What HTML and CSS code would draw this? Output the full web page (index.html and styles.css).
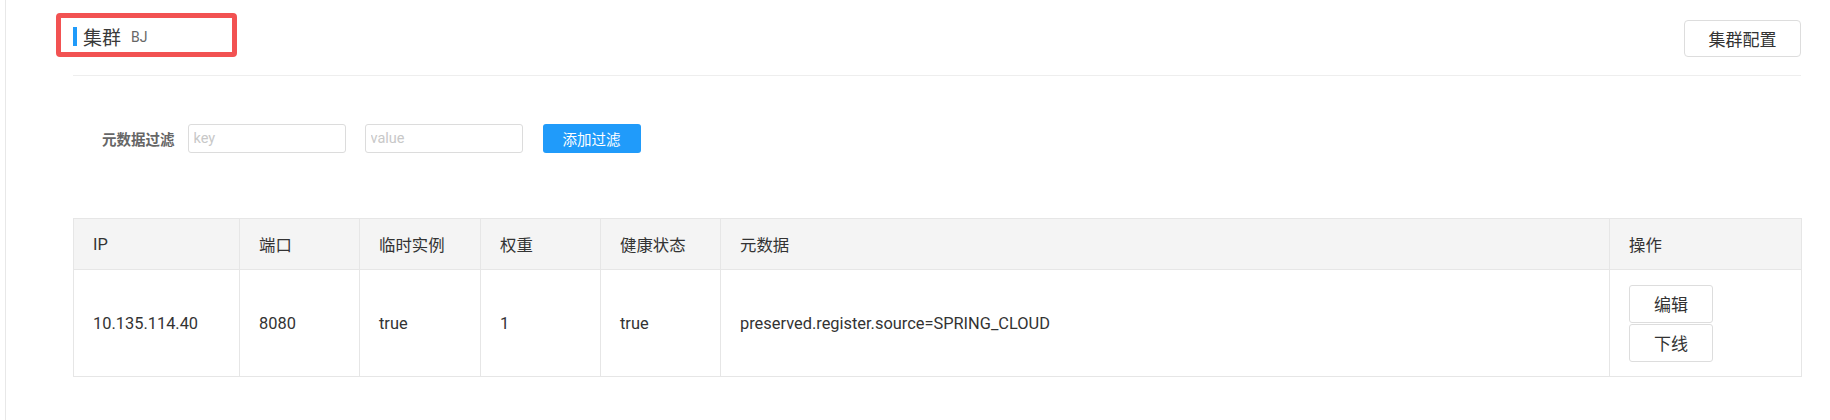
FILE: index.html
```html
<!DOCTYPE html>
<html lang="zh">
<head>
<meta charset="utf-8">
<title>集群</title>
<link rel="stylesheet" href="styles.css">
</head>
<body>
<div class="page">
  <div class="header">
    <div class="title-box"><span class="bar"></span><span class="title">集群</span><span class="sub">BJ</span></div>
    <button class="btn cfg">集群配置</button>
  </div>
  <div class="divider"></div>
  <div class="filter">
    <label class="flabel">元数据过滤</label>
    <input class="finput" placeholder="key">
    <input class="finput second" placeholder="value">
    <button class="btn-primary">添加过滤</button>
  </div>
  <table class="grid">
    <colgroup>
      <col style="width:166px"><col style="width:120px"><col style="width:121px"><col style="width:120px"><col style="width:120px"><col style="width:889px"><col style="width:192px">
    </colgroup>
    <thead>
      <tr><th>IP</th><th>端口</th><th>临时实例</th><th>权重</th><th>健康状态</th><th>元数据</th><th>操作</th></tr>
    </thead>
    <tbody>
      <tr>
        <td>10.135.114.40</td><td>8080</td><td>true</td><td>1</td><td>true</td>
        <td>preserved.register.source=SPRING_CLOUD</td>
        <td><div class="ops"><button class="btn op">编辑</button><button class="btn op">下线</button></div></td>
      </tr>
    </tbody>
  </table>
</div>
</body>
</html>
```
FILE: styles.css
```css
body {
  margin: 0;
  font-family: Roboto, "Noto Sans CJK SC", sans-serif;
  color: #333;
  background: #fff;
}
.page {
  margin-left: 5px;
  border-left: 1px solid #e8e8e8;
  min-height: 420px;
  padding: 0 29px 0 67px;
  box-sizing: border-box;
}
.header {
  display: flex;
  justify-content: space-between;
  align-items: flex-end;
  padding-top: 13px;
}
.title-box {
  margin-left: -17px;
  width: 181px;
  height: 44px;
  box-sizing: border-box;
  border: 5px solid #f25252;
  border-radius: 4px;
  display: flex;
  align-items: center;
  padding-left: 12px;
  padding-top: 3px;
}
.bar {
  width: 4px;
  height: 19px;
  background: #209bfa;
  margin-right: 6px;
}
.title {
  font-size: 19px;
  color: #3a3a3a;
}
.sub {
  font-size: 14px;
  color: #666;
  margin-left: 10px;
}
.btn {
  background: #fff;
  border: 1px solid #ddd;
  color: #333;
  font-family: inherit;
  cursor: pointer;
  padding: 0;
}
.cfg {
  width: 117px;
  height: 37px;
  border-radius: 4px;
  font-size: 17px;
}
.divider {
  height: 1px;
  background: #eee;
  margin-top: 18px;
}
.filter {
  display: flex;
  align-items: center;
  margin-top: 48px;
  padding-left: 29px;
}
.flabel {
  font-size: 14.5px;
  font-weight: bold;
  color: #666;
  margin-right: 13px;
}
.finput {
  width: 158px;
  height: 29px;
  box-sizing: border-box;
  border: 1px solid #dcdcdc;
  border-radius: 3px;
  padding: 0 5px;
  font-size: 14.5px;
  font-family: inherit;
}
.finput::placeholder {
  color: #c8c8c8;
}
.second {
  margin-left: 19px;
}
.btn-primary {
  margin-left: 20px;
  width: 98px;
  height: 29px;
  background: #209bfa;
  color: #fff;
  border: none;
  border-radius: 3px;
  font-size: 14.5px;
  font-family: inherit;
  padding: 0;
}
.grid {
  margin-top: 65px;
  border-collapse: collapse;
  width: 1728px;
  table-layout: fixed;
}
.grid th,
.grid td {
  border: 1px solid #e6e6e6;
  text-align: left;
  padding: 0 0 0 19px;
  font-weight: normal;
  font-size: 16.4px;
  color: #333;
}
.grid th {
  background: #f4f4f4;
  height: 50px;
}
.grid td {
  height: 106px;
}
.ops {
  display: flex;
  flex-direction: column;
  gap: 1px;
  width: 84px;
}
.op {
  width: 84px;
  height: 38px;
  border-radius: 3px;
  font-size: 17px;
}
```
